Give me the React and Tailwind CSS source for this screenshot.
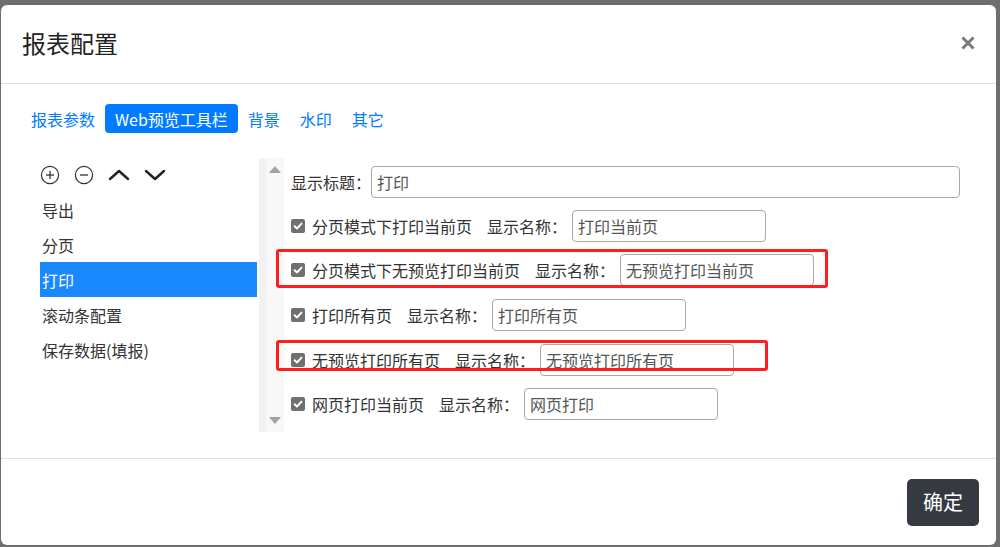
import React from "react";

const font = { fontFamily: '"Noto Sans CJK SC", "Noto Sans", sans-serif' };

function Check() {
  return (
    <span className="flex h-[14px] w-[14px] shrink-0 items-center justify-center rounded-[2px] bg-[#707070]">
      <svg width="10" height="10" viewBox="0 0 10 10">
        <path d="M1.6 5.2 L4 7.5 L8.5 2.6" fill="none" stroke="#fff" strokeWidth="1.9" strokeLinecap="round" strokeLinejoin="round" />
      </svg>
    </span>
  );
}

function Field({ value, width = "w-[194px]" }) {
  return (
    <div className={`flex h-[32px] ${width} items-center rounded-[4px] border border-[#a9a9a9] bg-white px-[5px] text-[16px] text-[#555]`}>
      {value}
    </div>
  );
}

function OptionRow({ label, value, className = "" }) {
  return (
    <div className={`flex h-[32px] items-center ${className}`}>
      <Check />
      <span className="ml-[7px] mr-[15px] text-[16px] text-[#333]">{label}</span>
      <span className="text-[16px] text-[#333]">显示名称：</span>
      <div className="ml-[5px]">
        <Field value={value} />
      </div>
    </div>
  );
}

function CircleIcon({ minus }) {
  return (
    <svg width="20" height="20" viewBox="0 0 20 20">
      <circle cx="10" cy="10" r="8.6" fill="none" stroke="#333" strokeWidth="1.2" />
      <path d="M6 10 H14" stroke="#333" strokeWidth="1.3" />
      {!minus && <path d="M10 6 V14" stroke="#333" strokeWidth="1.3" />}
    </svg>
  );
}

function Chevron({ down }) {
  return (
    <svg width="22" height="14" viewBox="0 0 22 14">
      <path
        d={down ? "M2 3 L11 11 L20 3" : "M2 11 L11 3 L20 11"}
        fill="none"
        stroke="#222"
        strokeWidth="2.4"
        strokeLinecap="round"
        strokeLinejoin="round"
      />
    </svg>
  );
}

export default function App() {
  const tabs = ["报表参数", "Web预览工具栏", "背景", "水印", "其它"];
  const items = ["导出", "分页", "打印", "滚动条配置", "保存数据(填报)"];

  return (
    <div className="h-[547px] w-[1000px] overflow-hidden bg-[#6e6e6e] pl-[1px] pt-[5px]" style={font}>
      <div className="flex h-[540px] w-[995px] flex-col rounded-[6px] bg-white">
        {/* header */}
        <div className="flex h-[79px] shrink-0 items-center justify-between border-b border-[#dee2e6] pl-[21px] pr-[20px]">
          <h1 className="pb-[2px] text-[24px] font-normal text-[#222]">报表配置</h1>
          <svg width="16" height="16" viewBox="0 0 16 16" className="mt-[-2px]">
            <path d="M2.5 2.5 L13.5 13.5 M13.5 2.5 L2.5 13.5" stroke="#7a7a7a" strokeWidth="3" />
          </svg>
        </div>

        {/* body */}
        <div className="relative flex-1 pl-[20px] pt-[20px]">
          <div className="flex">
            {tabs.map((t, i) =>
              i === 1 ? (
                <span key={t} className="flex h-[29px] items-center rounded-[4px] bg-[#007bff] px-[10px] text-[16px] text-white">
                  {t}
                </span>
              ) : (
                <span key={t} className="flex h-[29px] items-center px-[10px] text-[16px] text-[#007bff]">
                  {t}
                </span>
              )
            )}
          </div>

          <div className="mt-[25px] flex h-[274px]">
            {/* item list */}
            <div className="w-[236px] pl-[19px]">
              <div className="flex h-[34px] items-center gap-[14px] pl-[-1px]">
                <CircleIcon />
                <CircleIcon minus />
                <Chevron />
                <Chevron down />
              </div>
              <ul className="text-[16px] text-[#333]">
                {items.map((it) => (
                  <li
                    key={it}
                    className={`flex h-[35px] items-center pl-[2px] ${it === "打印" ? "bg-[#1a88ff] text-white" : ""}`}
                  >
                    {it}
                  </li>
                ))}
              </ul>
            </div>

            {/* scroll bar */}
            <div className="ml-[2px] flex w-[25px]">
              <div className="w-[7px] bg-[#f2f2f2]" />
              <div className="flex w-[18px] flex-col items-center justify-between bg-[#f8f8f8] py-[8px]">
                <svg width="12" height="7" viewBox="0 0 12 7">
                  <path d="M0 7 L6 0 L12 7 Z" fill="#a3a3a3" />
                </svg>
                <svg width="12" height="7" viewBox="0 0 12 7">
                  <path d="M0 0 L6 7 L12 0 Z" fill="#a3a3a3" />
                </svg>
              </div>
            </div>

            {/* options */}
            <div className="pl-[7px] pt-[8px]">
              <div className="flex h-[32px] items-center">
                <span className="text-[16px] text-[#333]">显示标题：</span>
                <Field value="打印" width="w-[589px]" />
              </div>
              <OptionRow className="mt-[12px]" label="分页模式下打印当前页" value="打印当前页" />
              <OptionRow className="mt-[12px]" label="分页模式下无预览打印当前页" value="无预览打印当前页" />
              <OptionRow className="mt-[13px]" label="打印所有页" value="打印所有页" />
              <OptionRow className="mt-[13px]" label="无预览打印所有页" value="无预览打印所有页" />
              <OptionRow className="mt-[12px]" label="网页打印当前页" value="网页打印" />
            </div>
          </div>

          {/* highlight marks over two rows */}
          <div className="pointer-events-none absolute left-[275px] top-[165px] h-[39px] w-[552px] rounded-[3px] border-[3px] border-[#ff1e1e]" />
          <div className="pointer-events-none absolute left-[275px] top-[256px] h-[31px] w-[492px] rounded-[3px] border-[3px] border-[#ff1e1e]" />
        </div>

        {/* footer */}
        <div className="flex h-[87px] shrink-0 items-center justify-end border-t border-[#dee2e6] pr-[17px]">
          <button className="flex h-[47px] w-[72px] items-center justify-center rounded-[5px] bg-[#343a40] text-[20px] text-white">
            确定
          </button>
        </div>
      </div>
    </div>
  );
}
